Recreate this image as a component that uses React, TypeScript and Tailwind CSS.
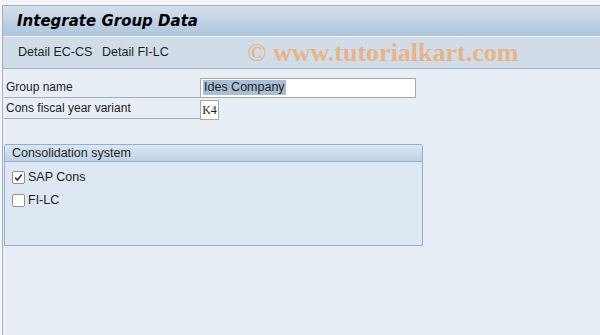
import React from "react";

const ui = { fontFamily: "'Liberation Sans', Arial, sans-serif" };

function FieldRow({ label, children }: { label: string; children: React.ReactNode }) {
  return (
    <div className="flex h-[21px] items-end">
      <div className="flex h-full w-[196px] items-center border-b border-[#a7adb4] pl-[2px] text-[12px] text-[#1d1d1d]">
        {label}
      </div>
      <div className="flex h-full items-center">{children}</div>
    </div>
  );
}

function Checkbox({ checked, label }: { checked?: boolean; label: string }) {
  return (
    <div className="flex h-[14px] items-center gap-[3px]">
      <div className="flex h-[13px] w-[13px] items-center justify-center rounded-[2px] border border-[#8c9096] bg-white">
        {checked ? (
          <svg width="9" height="9" viewBox="0 0 9 9">
            <path d="M1.2 4.6 L3.4 7 L7.8 1.4" fill="none" stroke="#3a3a3a" strokeWidth="1.6" />
          </svg>
        ) : null}
      </div>
      <span className="text-[12.5px] text-[#1d1d1d]">{label}</span>
    </div>
  );
}

export default function App() {
  return (
    <div className="h-[335px] w-[600px] overflow-hidden bg-[#f3f5f9] pt-[5px]" style={ui}>
      <div className="ml-[2px] flex h-full flex-col border-l border-t border-[#a3afbd] bg-[#e8eef6]">
        <div className="flex h-[30px] items-center bg-gradient-to-b from-[#d2e0ec] to-[#aec5dc] pl-[14px]">
          <span
            className="text-[15px] font-bold italic text-black"
            style={{ fontFamily: "'DejaVu Sans', Verdana, sans-serif" }}
          >
            Integrate Group Data
          </span>
        </div>
        <div className="flex h-[33px] items-center border-t border-[#eef3f8] border-b border-b-[#a9b1bb] bg-[#d0dde8] pl-[15px] text-[12.5px] text-[#1d1d1d]">
          <span className="w-[84px]">Detail EC-CS</span>
          <span className="w-[145px]">Detail FI-LC</span>
          <span
            className="text-[26px] font-bold text-[#e8b487]"
            style={{ fontFamily: "'Liberation Serif', 'Times New Roman', serif" }}
          >
            © www.tutorialkart.com
          </span>
        </div>

        <div className="flex flex-col pl-[1px] pt-[8px]">
          <FieldRow label="Group name">
            <div className="flex h-[20px] w-[216px] items-center border border-[#a5a9ae] bg-white pl-[2px]">
              <span className="bg-[#a8bdd6] px-[1px] text-[12.5px] leading-[15px] text-[#1d1d1d]">Ides Company</span>
            </div>
          </FieldRow>
          <FieldRow label="Cons fiscal year variant">
            <div
              className="mt-[2px] flex h-[20px] w-[19px] items-center justify-center border border-[#a5a9ae] bg-white text-[12px] text-[#1d1d1d]"
              style={{ fontFamily: "'Liberation Serif', serif" }}
            >
              K4
            </div>
          </FieldRow>

          <div className="mt-[25px] flex h-[102px] w-[419px] flex-col rounded-t-[2px] border border-[#8fb0cf] bg-[#dde8f3]">
            <div className="flex h-[17px] items-center border-b border-[#8fb0cf] bg-gradient-to-b from-[#dbe7f3] to-[#bed2e6] pl-[7px] text-[12.5px] text-[#1d1d1d]">
              Consolidation system
            </div>
            <div className="flex flex-col gap-[9px] pl-[7px] pt-[8px]">
              <Checkbox checked label="SAP Cons" />
              <Checkbox label="FI-LC" />
            </div>
          </div>
        </div>
      </div>
    </div>
  );
}
